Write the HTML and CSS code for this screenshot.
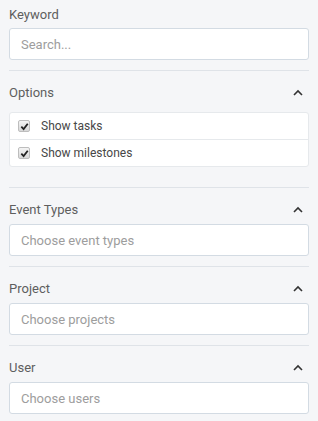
FILE: index.html
```html
<!DOCTYPE html>
<html lang="en">
<head>
  <meta charset="UTF-8" />
  <meta name="viewport" content="width=device-width, initial-scale=1.0" />
  <title>Filters</title>
  <link rel="stylesheet" href="styles.css">
</head>
<body>
  <aside class="filtros">
    <section class="grupo grupo-primero">
      <div class="grupo-cabecera">
        <label class="etiqueta" for="keyword">Keyword</label>
      </div>
      <input id="keyword" class="campo" type="text" placeholder="Search...">
    </section>

    <section class="grupo grupo-opciones">
      <div class="grupo-cabecera">
        <span class="etiqueta">Options</span>
        <svg class="chevron" viewBox="0 0 10 7" width="10" height="7"><polyline points="1,6 5,2 9,6" /></svg>
      </div>
      <div class="opciones">
        <label class="opcion">
          <span class="check"><svg viewBox="0 0 10 10" width="9" height="9"><path d="M1.5 5.2 L4 7.8 L8.6 2" /></svg></span>
          Show tasks
        </label>
        <label class="opcion">
          <span class="check"><svg viewBox="0 0 10 10" width="9" height="9"><path d="M1.5 5.2 L4 7.8 L8.6 2" /></svg></span>
          Show milestones
        </label>
      </div>
    </section>

    <section class="grupo">
      <div class="grupo-cabecera">
        <span class="etiqueta">Event Types</span>
        <svg class="chevron" viewBox="0 0 10 7" width="10" height="7"><polyline points="1,6 5,2 9,6" /></svg>
      </div>
      <input class="campo" type="text" placeholder="Choose event types">
    </section>

    <section class="grupo">
      <div class="grupo-cabecera">
        <span class="etiqueta">Project</span>
        <svg class="chevron" viewBox="0 0 10 7" width="10" height="7"><polyline points="1,6 5,2 9,6" /></svg>
      </div>
      <input class="campo" type="text" placeholder="Choose projects">
    </section>

    <section class="grupo grupo-ultimo">
      <div class="grupo-cabecera">
        <span class="etiqueta">User</span>
        <svg class="chevron" viewBox="0 0 10 7" width="10" height="7"><polyline points="1,6 5,2 9,6" /></svg>
      </div>
      <input class="campo" type="text" placeholder="Choose users">
    </section>
  </aside>
</body>
</html>
```

FILE: styles.css
```css
body {
  font-family: Roboto, "Liberation Sans", Arial, sans-serif;
  background: #f5f6f8;
  margin: 0;
  padding: 0;
}

.filtros {
  padding: 0 9px;
}

.grupo {
  padding: 11px 0 10px;
  border-bottom: 1px solid #dfe3e8;
}

.grupo-primero {
  padding-top: 4px;
}

.grupo-primero .grupo-cabecera {
  margin-bottom: 4px;
}

.grupo-ultimo {
  border-bottom: none;
}

.grupo-cabecera {
  display: flex;
  align-items: center;
  justify-content: space-between;
  height: 20px;
  margin-bottom: 5px;
}

.etiqueta {
  font-size: 13px;
  color: #5e5e5e;
  line-height: 20px;
  padding-top: 1px;
}

.chevron {
  margin-right: 6px;
  fill: none;
  stroke: #333;
  stroke-width: 1.6;
}

.campo {
  display: block;
  box-sizing: border-box;
  width: 100%;
  height: 32px;
  padding: 0 11px;
  border: 1px solid #d3dbe3;
  border-radius: 3px;
  background: #fff;
  font-family: inherit;
  font-size: 13px;
  color: #333;
  outline: none;
}

.campo::placeholder {
  color: #9d9d9d;
}

/* Opciones */
.grupo-opciones {
  padding-bottom: 20px;
}

.grupo-opciones .grupo-cabecera {
  margin-bottom: 10px;
}

.opciones {
  background: #fff;
  border: 1px solid #e6e9ec;
  border-radius: 3px;
}

.opcion {
  display: flex;
  align-items: center;
  gap: 11px;
  height: 26px;
  padding-left: 8px;
  font-size: 12px;
  color: #474747;
}

.opcion + .opcion {
  border-top: 1px solid #e6e9ec;
}

.check {
  display: flex;
  align-items: center;
  justify-content: center;
  box-sizing: border-box;
  width: 12px;
  height: 12px;
  border: 1px solid #bdbdbd;
  border-radius: 2px;
  background: linear-gradient(#f4f4f4, #d8d8d8);
}

.check svg {
  fill: none;
  stroke: #222;
  stroke-width: 2;
}
```
